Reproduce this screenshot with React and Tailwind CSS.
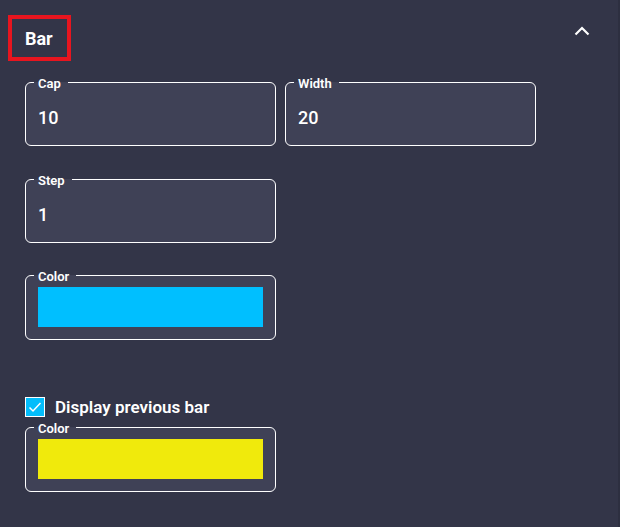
import { useState } from 'react';

const NumberField = ({ label, value }) => (
  <fieldset className="m-0 w-[251px] rounded-[6px] border border-white bg-[#3f4156] px-3 pt-[15px] pb-[15px]">
    <legend className="-ml-[4px] pt-[4px] pl-[4px] pr-[7px] text-[13px] font-semibold leading-[14px] text-white">
      {label}
    </legend>
    <div className="text-[18px] font-medium leading-[24px] text-white">{value}</div>
  </fieldset>
);

const ColorField = ({ color }) => (
  <fieldset className="m-0 w-[251px] rounded-[6px] border border-white bg-[#3f4156] px-3 pt-[3px] pb-[12px]">
    <legend className="-ml-[4px] pt-[4px] pl-[4px] pr-[7px] text-[13px] font-semibold leading-[14px] text-white">
      Color
    </legend>
    <div className={`h-[40px] w-full ${color}`}></div>
  </fieldset>
);

export default function App() {
  const [open, setOpen] = useState(true);
  const [showPrev, setShowPrev] = useState(true);

  return (
    <div
      className="h-[527px] w-[620px] overflow-hidden border-r-2 border-[#2d2f40] bg-[#333548] text-white"
      style={{ fontFamily: 'Roboto, "Noto Sans", sans-serif' }}
    >
      <div className="flex items-center justify-between pt-[15px] pr-[28px] pl-[8px]">
        <div className="flex h-[46px] w-[63px] items-center border-4 border-[#e8151f] pl-[13px] text-[18px] font-bold">
          Bar
        </div>
        <button onClick={() => setOpen(!open)} className="mb-[14px] text-white">
          <svg width="16" height="10" viewBox="0 0 16 10" fill="none" stroke="currentColor" strokeWidth="2.2">
            <polyline points="1.5,8.5 8,2 14.5,8.5" />
          </svg>
        </button>
      </div>

      {open && (
        <div className="flex flex-col pl-[25px] pt-[12px]">
          <div className="flex gap-[9px]">
            <NumberField label="Cap" value="10" />
            <NumberField label="Width" value="20" />
          </div>
          <div className="mt-[24px]">
            <NumberField label="Step" value="1" />
          </div>
          <div className="mt-[23px]">
            <ColorField color="bg-[#00bfff]" />
          </div>

          <label className="mt-[57px] flex h-[20px] cursor-pointer items-center gap-[10px]">
            <span
              onClick={() => setShowPrev(!showPrev)}
              className="flex h-[20px] w-[20px] items-center justify-center border-[1.5px] border-white bg-[#03bdfb]"
            >
              {showPrev && (
                <svg width="14" height="12" viewBox="0 0 14 12" fill="none" stroke="white" strokeWidth="1.5">
                  <polyline points="1.5,6.5 5,10 12.5,2" />
                </svg>
              )}
            </span>
            <span className="text-[17px] font-semibold leading-[20px]">Display previous bar</span>
          </label>

          <div className="mt-[1px]">
            <ColorField color="bg-[#f0ea0c]" />
          </div>
        </div>
      )}
    </div>
  );
}
